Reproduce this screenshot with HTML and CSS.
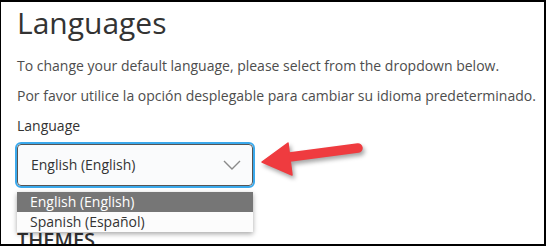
FILE: index.html
```
<!DOCTYPE html>
<html lang="en">
<head>
    <meta charset="UTF-8">
    <meta name="viewport" content="width=device-width, initial-scale=1.0">
    <title>Languages</title>
    <link rel="stylesheet" href="styles.css">
</head>
<body>
    <div class="frame">
        <h1 class="title">Languages</h1>
        <p class="note">To change your default language, please select from the dropdown below.</p>
        <p class="note">Por favor utilice la opción desplegable para cambiar su idioma predeterminado.</p>
        <label class="fieldLabel">Language</label>
        <div class="selectWrap">
            <div class="select">
                <span>English (English)</span>
                <svg class="chevron" width="18" height="10" viewBox="0 0 18 10">
                    <path d="M1 1 L9 9 L17 1" fill="none" stroke="#8a8a8a" stroke-width="1.4"/>
                </svg>
            </div>
            <ul class="options">
                <li class="option active">English (English)</li>
                <li class="option">Spanish (Español)</li>
            </ul>
        </div>
        <h2 class="section">THEMES</h2>

        <!-- callout arrow -->
        <svg class="arrow" width="546" height="246" viewBox="0 0 546 246">
            <line x1="286" y1="157.5" x2="358" y2="148" stroke="#ef3b3f" stroke-width="9.5" stroke-linecap="round"/>
            <polygon points="262,162 288,143 292,175" fill="#ef3b3f" stroke="#ef3b3f" stroke-width="1.5" stroke-linejoin="round"/>
        </svg>
    </div>
</body>
</html>
```

FILE: styles.css
```
* {
    box-sizing: border-box;
}
body {
    margin: 0;
    background-color: white;
    font-family: "Open Sans", "Liberation Sans", sans-serif;
}
.frame {
    position: relative;
    width: 546px;
    height: 246px;
    border-top: 2px solid black;
    border-left: 1px solid black;
    border-right: 2px solid black;
    border-bottom: 2px solid black;
    padding-left: 16px;
    overflow: hidden;
    background-color: white;
}
.title {
    margin: 3px 0 0 0;
    font-size: 30px;
    line-height: 36px;
    font-weight: 400;
    color: #333;
}
.note {
    margin: 10px 0 0 0;
    font-size: 14px;
    line-height: 20px;
    color: #4d4d4d;
}
.title + .note {
    margin-top: 15px;
}
.fieldLabel {
    display: block;
    margin-top: 10px;
    font-size: 14px;
    line-height: 20px;
    color: #333;
}
.selectWrap {
    position: relative;
    width: 236px;
    margin-top: 8px;
}
.select {
    display: flex;
    align-items: center;
    justify-content: space-between;
    height: 42px;
    padding: 0 11px 0 13px;
    border: 1px solid #555;
    border-radius: 4px;
    outline: 2px solid #3ba9ec;
    background-color: #fafbfc;
    font-size: 14px;
    line-height: 20px;
    color: #333;
}
.chevron {
    display: block;
}
.options {
    position: absolute;
    top: 48px;
    left: 0;
    width: 236px;
    margin: 0;
    padding: 0;
    list-style: none;
    background-color: #fcfcfc;
    box-shadow: 0 2px 5px rgba(0, 0, 0, 0.35);
    z-index: 2;
}
.option {
    height: 20px;
    padding-left: 13px;
    font-size: 14px;
    line-height: 20px;
    color: #333;
}
.option.active {
    background-color: #767676;
    color: white;
}
.section {
    margin: 42px 0 0 0;
    font-size: 20px;
    line-height: 24px;
    font-weight: 600;
    color: #333;
}
.arrow {
    position: absolute;
    top: -2px;
    left: -1px;
    filter: drop-shadow(2px 3px 2px rgba(0, 0, 0, 0.35));
    z-index: 3;
}
```
